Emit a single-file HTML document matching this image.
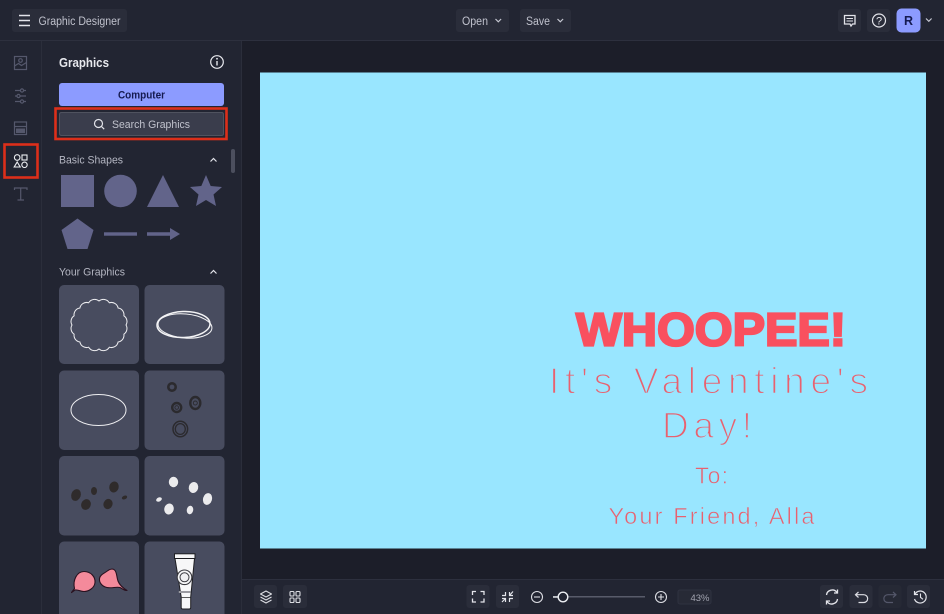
<!DOCTYPE html>
<html><head><meta charset="utf-8"><style>
html,body{margin:0;padding:0;width:944px;height:614px;overflow:hidden;background:#1c1e29}
svg{display:block;font-family:"Liberation Sans",sans-serif}
</style></head><body>
<svg width="944" height="614" viewBox="0 0 944 614" xmlns="http://www.w3.org/2000/svg">
<rect width="944" height="614" fill="#1c1e29"/>
<!-- top bar -->
<rect width="944" height="41" fill="#222532"/>
<rect y="40" width="944" height="1" fill="#2d303e"/>
<!-- side rail -->
<rect y="41" width="41" height="573" fill="#222532"/>
<rect x="41" y="41" width="1" height="573" fill="#2b2e3b"/>
<!-- panel -->
<rect x="42" y="41" width="199" height="573" fill="#222532"/>
<rect x="241" y="41" width="1" height="573" fill="#2b2e3b"/>
<!-- bottom bar -->
<rect x="242" y="579" width="702" height="35" fill="#222532"/>
<rect x="242" y="579" width="702" height="1" fill="#2d303e"/>

<!-- top left -->
<rect x="12" y="9" width="115" height="23" rx="3" fill="#2a2d3a"/>
<path d="M19 15.500h11M19 20.500h11M19 25.500h11" stroke="#e3e4ea" stroke-width="1.400"/>
<text x="38.500" y="25" font-size="11.500" fill="#c0c2cd" textLength="82" lengthAdjust="spacingAndGlyphs">Graphic Designer</text>

<!-- open/save -->
<rect x="456" y="9" width="53" height="23" rx="3" fill="#2a2d3a"/>
<text x="462" y="25" font-size="11.500" fill="#c0c2cd" textLength="26" lengthAdjust="spacingAndGlyphs">Open</text>
<path d="M495.500 19l2.800 2.800 2.800-2.800" fill="none" stroke="#c6c8d2" stroke-width="1.200"/>
<rect x="520" y="9" width="51" height="23" rx="3" fill="#2a2d3a"/>
<text x="526" y="25" font-size="11.500" fill="#c0c2cd" textLength="24" lengthAdjust="spacingAndGlyphs">Save</text>
<path d="M557.500 19l2.800 2.800 2.800-2.800" fill="none" stroke="#c6c8d2" stroke-width="1.200"/>

<!-- top right -->
<rect x="838" y="9" width="23" height="23" rx="3" fill="#2a2d3a"/>
<path d="M844.500 15.500h10.500v8.500h-2.500l-1.500 2-1-2h-5.500z" fill="none" stroke="#e3e4ea" stroke-width="1.300"/>
<path d="M846.500 18.500h6.500M846.500 21h6.500" stroke="#e3e4ea" stroke-width="1"/>
<rect x="867" y="9" width="23" height="23" rx="3" fill="#2a2d3a"/>
<circle cx="879" cy="20.500" r="6.500" fill="none" stroke="#e3e4ea" stroke-width="1.200"/>
<text x="879" y="24.500" font-size="11" fill="#e3e4ea" text-anchor="middle">?</text>
<rect x="896.500" y="8.500" width="24" height="24" rx="5" fill="#8c9bff"/>
<text x="908.500" y="25" font-size="12.500" font-weight="bold" fill="#151a50" text-anchor="middle">R</text>
<path d="M926 18.500l2.800 2.800 2.800-2.800" fill="none" stroke="#c6c8d2" stroke-width="1.200"/>

<!-- rail icons -->
<g fill="none" stroke="#55586c" stroke-width="1.200">
<rect x="14.500" y="56.500" width="12" height="13"/>
<circle cx="20.500" cy="60.500" r="1.800"/>
<path d="M14.500 66l4-2.500 3 2 5-3"/>
<path d="M15 90.500h11M15 96h11M15 101.500h11"/>
<circle cx="22" cy="90.500" r="1.600" fill="#222532"/>
<circle cx="18.500" cy="96" r="1.600" fill="#222532"/>
<circle cx="22" cy="101.500" r="1.600" fill="#222532"/>
<rect x="14.500" y="122" width="12" height="12.500"/>
<path d="M14.500 126.500h12"/>
<rect x="16" y="128.500" width="9" height="4.500" fill="#55586c" stroke="none"/>
<path d="M14.500 190v-2h12.500v2M20.700 188v12M17.500 200h6.500"/>
</g>
<g fill="none" stroke="#eceef2" stroke-width="1.100">
<circle cx="17.200" cy="157.500" r="2.800"/>
<rect x="22" y="155" width="5" height="5"/>
<path d="M17.200 162l3 5h-6z"/>
<circle cx="24.500" cy="164.800" r="2.700"/>
</g>
<rect x="4.500" y="144.500" width="33" height="33" fill="none" stroke="#dc2f1a" stroke-width="2.600"/>

<!-- panel header -->
<text x="59" y="67" font-size="13" font-weight="bold" fill="#e8e9ee" textLength="50" lengthAdjust="spacingAndGlyphs">Graphics</text>
<circle cx="217" cy="62" r="6.300" fill="none" stroke="#e8e9ee" stroke-width="1.200"/>
<path d="M217 61v4.500" stroke="#e8e9ee" stroke-width="1.400"/>
<circle cx="217" cy="58.800" r="0.900" fill="#e8e9ee"/>

<rect x="59" y="83" width="165" height="23" rx="3" fill="#8c9bff"/>
<text x="141.500" y="98.500" font-size="11" font-weight="bold" fill="#151a50" text-anchor="middle" textLength="47" lengthAdjust="spacingAndGlyphs">Computer</text>

<rect x="59" y="112" width="165" height="24" rx="2" fill="#3a3d4c"/>
<rect x="59.500" y="112.500" width="164" height="23" rx="2" fill="none" stroke="#50535f"/>
<circle cx="98.500" cy="123.500" r="4" fill="none" stroke="#e3e4ea" stroke-width="1.200"/>
<path d="M101.500 126.500l2.700 2.700" stroke="#e3e4ea" stroke-width="1.200"/>
<text x="112" y="128" font-size="11" fill="#c0c2cd" textLength="78" lengthAdjust="spacingAndGlyphs">Search Graphics</text>
<rect x="55.500" y="108.500" width="171" height="30.500" fill="none" stroke="#dc2f1a" stroke-width="2.600"/>

<!-- scrollbar -->
<rect x="231" y="149" width="4" height="24" rx="2" fill="#4c4f5e"/>

<!-- basic shapes -->
<text x="59" y="163.500" font-size="11" fill="#b4b6c2" textLength="64" lengthAdjust="spacingAndGlyphs">Basic Shapes</text>
<path d="M210.500 161.500l3-3 3 3" fill="none" stroke="#e3e4ea" stroke-width="1.200"/>
<g fill="#62648a">
<rect x="61" y="175" width="33" height="32"/>
<circle cx="120.500" cy="191" r="16.300"/>
<path d="M163 175l16 32h-32z"/>
<path d="M206 175l4.700 11 11.300 1-8.500 7.500 2.500 11.500-10-6-10 6 2.500-11.500-8.500-7.500 11.300-1z"/>
<path d="M77.500 218.500l16 11.500-6 19h-20l-6-19z"/>
<rect x="104" y="232.300" width="33" height="3.400"/>
<path d="M147 232.300h23v-4.300l10 6-10 6v-4.300h-23z"/>
</g>

<!-- your graphics -->
<text x="59" y="275.500" font-size="11" fill="#b4b6c2" textLength="66" lengthAdjust="spacingAndGlyphs">Your Graphics</text>
<path d="M210.500 273.500l3-3 3 3" fill="none" stroke="#e3e4ea" stroke-width="1.200"/>
<g fill="#484c5f">
<rect x="59" y="285" width="80" height="79" rx="5"/>
<rect x="144.500" y="285" width="80" height="79" rx="5"/>
<rect x="59" y="370.500" width="80" height="79.500" rx="5"/>
<rect x="144.500" y="370.500" width="80" height="79.500" rx="5"/>
<rect x="59" y="456" width="80" height="79.500" rx="5"/>
<rect x="144.500" y="456" width="80" height="79.500" rx="5"/>
<rect x="59" y="541.500" width="80" height="80" rx="5"/>
<rect x="144.500" y="541.500" width="80" height="80" rx="5"/>
</g>

<!-- scalloped circle -->
<path d="M126 325A6.800 6.800 0 0 1 123.900 334.200A6.800 6.800 0 0 1 118.100 342A6.800 6.800 0 0 1 109.300 347.200A6.800 6.800 0 0 1 99 349A6.800 6.800 0 0 1 88.700 347.200A6.800 6.800 0 0 1 79.900 342A6.800 6.800 0 0 1 74.100 334.200A6.800 6.800 0 0 1 72 325A6.800 6.800 0 0 1 74.100 315.800A6.800 6.800 0 0 1 79.900 308A6.800 6.800 0 0 1 88.700 302.800A6.800 6.800 0 0 1 99 301A6.800 6.800 0 0 1 109.300 302.800A6.800 6.800 0 0 1 118.100 308A6.800 6.800 0 0 1 123.900 315.800A6.800 6.800 0 0 1 126 325Z" fill="none" stroke="#eeeef1" stroke-width="1"/>
<!-- ovals -->
<g fill="none" stroke="#f4f4f6">
<ellipse cx="183.500" cy="324.500" rx="26.500" ry="13" stroke-width="1.500" transform="rotate(-2 183.500 324.500)"/>
<ellipse cx="185" cy="326" rx="27" ry="12" stroke-width="1" transform="rotate(5 185 326)"/>
</g>
<ellipse cx="98.500" cy="410" rx="27.500" ry="15.500" fill="none" stroke="#eeeef1" stroke-width="1"/>
<!-- dark swirls -->
<g fill="none" stroke="#2b2a2e">
<circle cx="172" cy="387" r="3.700" stroke-width="2.600"/>
<circle cx="176.700" cy="407.500" r="4.500" stroke-width="2.400"/>
<circle cx="176.700" cy="407.500" r="1.800" stroke-width="0.900"/>
<ellipse cx="195.300" cy="403" rx="5" ry="6" stroke-width="2.400"/>
<circle cx="195.300" cy="403" r="2" stroke-width="0.900"/>
<ellipse cx="180.300" cy="429" rx="7.300" ry="7.800" stroke-width="1.500"/>
<ellipse cx="180.300" cy="429" rx="5" ry="5.400" stroke-width="1.300"/>
</g>
<!-- dark blobs -->
<g fill="#2f2b2b">
<ellipse cx="76" cy="495" rx="4.700" ry="6" transform="rotate(20 76 495)"/>
<ellipse cx="94" cy="491" rx="3" ry="4"/>
<ellipse cx="86" cy="504.500" rx="4.700" ry="5.500" transform="rotate(25 86 504.500)"/>
<ellipse cx="114" cy="487" rx="4.700" ry="5.500" transform="rotate(15 114 487)"/>
<ellipse cx="108" cy="504" rx="4.500" ry="5.200" transform="rotate(20 108 504)"/>
<ellipse cx="124.500" cy="497.500" rx="2.800" ry="1.800" transform="rotate(-25 124.500 497.500)"/>
</g>
<!-- white blobs -->
<g fill="#ebebed">
<ellipse cx="173.500" cy="482" rx="4.700" ry="5.200"/>
<ellipse cx="193.500" cy="487.500" rx="4.700" ry="5.500" transform="rotate(15 193.500 487.500)"/>
<ellipse cx="207.500" cy="499" rx="4.500" ry="6" transform="rotate(15 207.500 499)"/>
<ellipse cx="159" cy="499.500" rx="3" ry="2" transform="rotate(-25 159 499.500)"/>
<ellipse cx="169" cy="509" rx="4.700" ry="5.500" transform="rotate(15 169 509)"/>
<ellipse cx="190" cy="510" rx="3.200" ry="4.300" transform="rotate(10 190 510)"/>
</g>
<!-- pink shapes -->
<g fill="#f48a9b" stroke="#2a1220" stroke-width="1.100" stroke-linejoin="round">
<path d="M71.500 592.500L74.500 588.500C72.500 580 77 571.500 84 571.500C91 571.500 95.500 577 95 582.500C94.500 588.500 88 591.500 84 591.500C81 591.500 77.500 589.500 75 590Z"/>
<path d="M127 590.500C124 590.500 122 588.500 120 587.500C116 586.500 112 588.500 107 587.500C102 586.500 99 582.500 99.500 578.500C100 574.500 105 573 108 570.500C110 569 113 568.500 114.500 570C117 572 116.500 577 118 581C119.500 585 123 588 127 590.500Z"/>
</g>
<!-- tube -->
<path d="M175 558.500h19.500l-3.800 38.500v10.500q0 1.500-1.500 1.500h-6.500q-1.500 0-1.500-1.500v-10.500z" fill="#f7f7f8" stroke="#1e1e22" stroke-width="1"/>
<rect x="174.500" y="553.800" width="20.500" height="4.700" fill="#f7f7f8" stroke="#1e1e22" stroke-width="1"/>
<circle cx="184.500" cy="577.300" r="7.300" fill="#f7f7f8" stroke="#3a3a40" stroke-width="1.100"/>
<circle cx="184.500" cy="577.300" r="4.500" fill="#f0f0f2" stroke="#3a3a40" stroke-width="1"/>
<path d="M178.800 592h11.800" stroke="#9a9aa0" stroke-width="2"/>
<path d="M180.500 597.500h10" stroke="#333" stroke-width="0.800"/>

<!-- canvas -->
<rect x="260" y="72.500" width="666" height="476" fill="#99e6ff"/>
<text x="576" y="345.500" font-size="46" font-weight="bold" fill="#f9505f" stroke="#f9505f" stroke-width="2.200" textLength="270" lengthAdjust="spacingAndGlyphs">WHOOPEE!</text>
<g fill="#e9616f" stroke="#99e6ff">
<text x="549" y="393.500" font-size="37" stroke-width="1.500" textLength="319" lengthAdjust="spacing">It's Valentine's</text>
<text x="662" y="438" font-size="37" stroke-width="1.500" textLength="90" lengthAdjust="spacing">Day!</text>
<text x="695" y="483.500" font-size="23" stroke-width="0.600" textLength="33" lengthAdjust="spacing">To:</text>
<text x="608.500" y="524" font-size="23.500" stroke-width="0.600" textLength="206" lengthAdjust="spacing">Your Friend, Alla</text>
</g>

<!-- bottom left -->
<rect x="254" y="585" width="23" height="23" rx="3" fill="#2a2d3a"/>
<g fill="none" stroke="#dcdde3" stroke-width="1.100" stroke-linejoin="round">
<path d="M266 591l5.500 3-5.500 3-5.500-3z"/>
<path d="M260.500 597l5.500 3 5.500-3M260.500 600l5.500 3 5.500-3"/>
</g>
<rect x="283" y="585" width="24" height="23" rx="3" fill="#2a2d3a"/>
<g fill="none" stroke="#dcdde3" stroke-width="1.100">
<rect x="290" y="591.500" width="4" height="4.500" rx="1"/><rect x="296" y="591.500" width="4" height="4.500" rx="1"/>
<rect x="290" y="598" width="4" height="4.500" rx="1"/><rect x="296" y="598" width="4" height="4.500" rx="1"/>
</g>

<!-- bottom center -->
<rect x="466.500" y="585" width="23" height="23" rx="3" fill="#2a2d3a"/>
<path d="M476 591.500h-3.500v3.500M480.500 591.500h3.500v3.500M476 602h-3.500v-3.500M480.500 602h3.500v-3.500" fill="none" stroke="#e3e4ea" stroke-width="1.300"/>
<rect x="496" y="585" width="23" height="23" rx="3" fill="#2a2d3a"/>
<path d="M502 595.500h3.500V592M509.500 592v3.500h3.500M513 591.500l-3.500 4M502 598.500h3.500v3.500M509.500 602v-3.500h3.500M502 602l3.500-3.500" fill="none" stroke="#e3e4ea" stroke-width="1.200"/>
<circle cx="537" cy="597" r="5.500" fill="none" stroke="#dcdde3" stroke-width="1.100"/>
<path d="M534 597h6" stroke="#dcdde3" stroke-width="1.100"/>
<rect x="553" y="596" width="92" height="1.500" fill="#585b6a"/>
<path d="M553 597h5" stroke="#eceef2" stroke-width="1.400"/>
<circle cx="563" cy="597" r="4.800" fill="#222532" stroke="#eceef2" stroke-width="1.400"/>
<circle cx="661" cy="597" r="5.500" fill="none" stroke="#dcdde3" stroke-width="1.100"/>
<path d="M658 597h6M661 594v6" stroke="#dcdde3" stroke-width="1.100"/>
<rect x="678" y="590" width="33" height="14" rx="2" fill="#272a36" stroke="#2f3240"/>
<text x="700" y="601" font-size="9.500" fill="#a2a4b0" text-anchor="middle">43%</text>

<!-- bottom right -->
<rect x="820" y="585" width="23" height="23" rx="3" fill="#2a2d3a"/>
<path d="M826.500 595c.5-5 7.500-7 10.500-2.500M837.500 599c-.5 5-7.500 7-10.500 2.500" fill="none" stroke="#e3e4ea" stroke-width="1.300"/>
<path d="M837.500 589.500v3.500h-3.500M826.500 604.500v-3.500h3.500" fill="none" stroke="#e3e4ea" stroke-width="1.300"/>
<rect x="849.500" y="585" width="23" height="23" rx="3" fill="#2a2d3a"/>
<path d="M858.500 592l-3 2.700 3 2.800M855.500 594.700h8c5.500 0 5.500 7.800 0 7.800h-5" fill="none" stroke="#dcdde3" stroke-width="1.200"/>
<rect x="878.500" y="585" width="23" height="23" rx="3" fill="#262935"/>
<path d="M893 592l3 2.700-3 2.800M896 594.700h-8c-5.500 0-5.500 7.800 0 7.800h5" fill="none" stroke="#54576a" stroke-width="1.200"/>
<rect x="907" y="585" width="23" height="23" rx="3" fill="#2a2d3a"/>
<path d="M914.500 591v3.500h3.500M915 594a6 6 0 1 1-.5 5" fill="none" stroke="#e3e4ea" stroke-width="1.200"/>
<path d="M920.500 593.500v3.800l2.500 2" fill="none" stroke="#e3e4ea" stroke-width="1.100"/>
</svg>
</body></html>
